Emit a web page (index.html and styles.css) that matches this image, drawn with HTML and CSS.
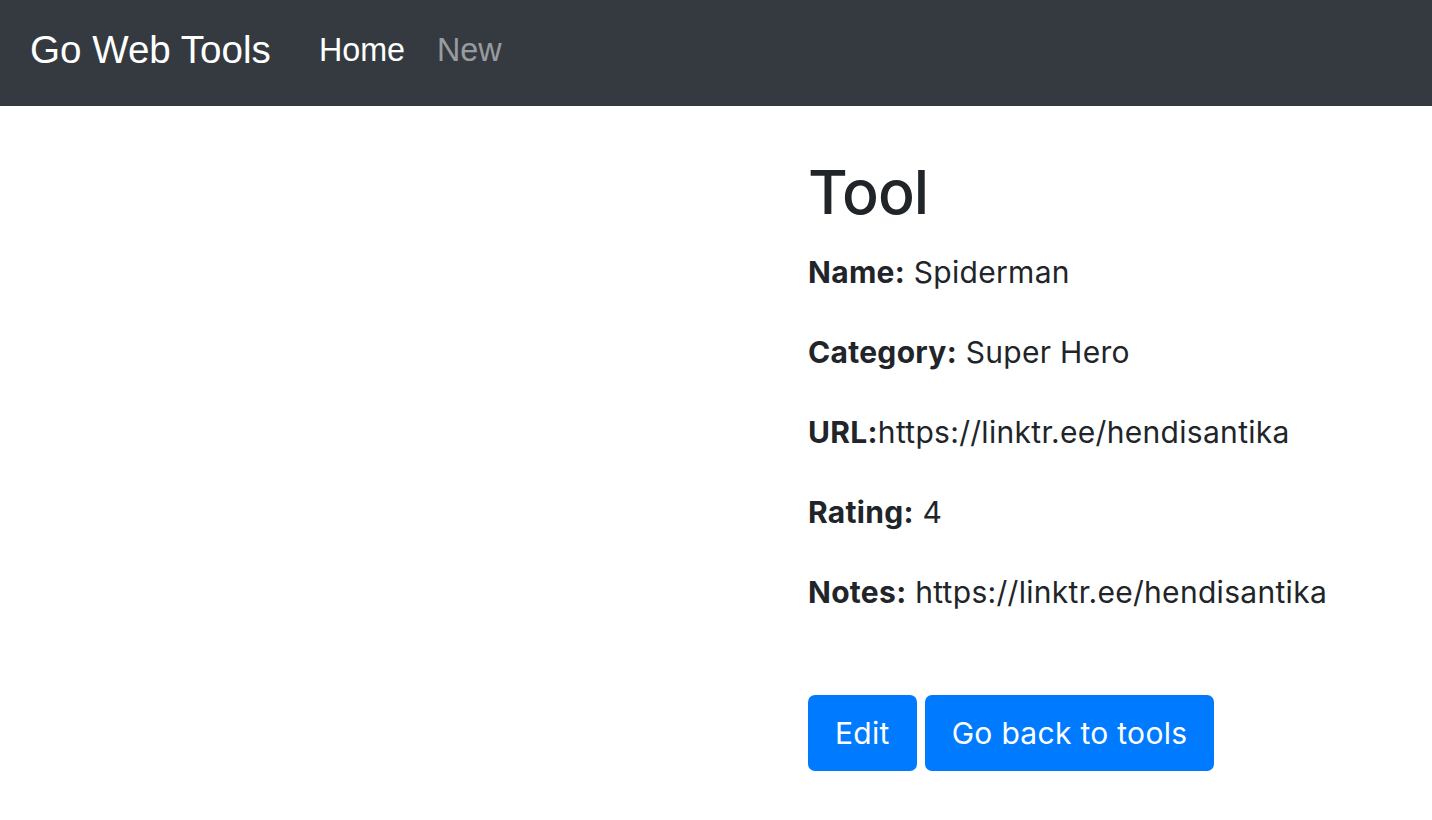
FILE: index.html
```html
<!DOCTYPE html>
<html lang="en">
<head>
<meta charset="utf-8">
<title>Go Web Tools</title>
<link rel="stylesheet" href="styles.css">
</head>
<body>
<nav class="navbar">
  <a class="brand" href="#">Go Web Tools</a>
  <ul class="nav">
    <li><a class="nav-link active" href="#">Home</a></li>
    <li><a class="nav-link" href="#">New</a></li>
  </ul>
</nav>
<main class="page">
  <div class="col-left"></div>
  <section class="col-right">
    <h1 class="title">Tool</h1>
    <p class="field"><strong>Name:</strong> Spiderman</p>
    <p class="field"><strong>Category:</strong> Super Hero</p>
    <p class="field"><strong>URL:</strong>https://linktr.ee/hendisantika</p>
    <p class="field"><strong>Rating:</strong> 4</p>
    <p class="field"><strong>Notes:</strong> https://linktr.ee/hendisantika</p>
    <div class="actions">
      <a class="btn" href="#">Edit</a>
      <a class="btn" href="#">Go back to tools</a>
    </div>
  </section>
</main>
</body>
</html>
```

FILE: styles.css
```css
* { box-sizing: border-box; }
html, body { margin: 0; padding: 0; }
body {
  background: #fff;
  color: #212529;
  font-family: Inter, "Noto Sans", sans-serif;
  font-size: 30px;
  letter-spacing: 0.3px;
}
a { text-decoration: none; }

.navbar {
  display: flex;
  align-items: center;
  height: 106px;
  padding: 20px 30px 26px 30px;
  background: #343a40;
  font-family: "Liberation Sans", Arial, sans-serif;
  letter-spacing: 0;
}
.brand {
  color: #fff;
  font-size: 38.6px;
  line-height: 60px;
  margin-right: 32px;
}
.nav {
  display: flex;
  list-style: none;
  margin: 0;
  padding: 0;
}
.nav-link {
  display: block;
  font-size: 32.3px;
  line-height: 48px;
  padding: 0 16px;
  color: rgba(255, 255, 255, 0.5);
}
.nav-link.active { color: #fff; }

.page {
  display: grid;
  grid-template-columns: 808px 1fr;
}
.col-right {
  padding-top: 50px;
}
.title {
  margin: 0 0 23px 0;
  font-size: 61px;
  font-weight: 500;
  line-height: 73px;
  letter-spacing: -1px;
}
.field {
  margin: 0 0 40px 0;
  line-height: 40px;
}
.field strong { font-weight: 700; }
.field:last-of-type { margin-bottom: 83px; }

.actions {
  display: flex;
  gap: 8px;
}
.btn {
  display: inline-block;
  background: #007bff;
  color: #fff;
  font-size: 30px;
  line-height: 44px;
  padding: 16px 27px;
  border-radius: 7px;
}
```
